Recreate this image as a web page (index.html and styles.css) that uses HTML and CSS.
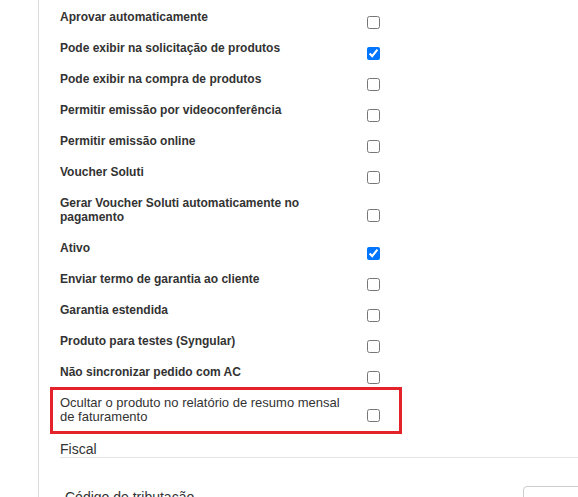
FILE: index.html
```html
<!DOCTYPE html>
<html lang="pt-BR">
<head>
<meta charset="utf-8">
<title>Produto</title>
<link rel="stylesheet" href="styles.css">
</head>
<body>
<div class="panel">
  <div class="row"><label class="lbl">Aprovar automaticamente</label><input class="cb" type="checkbox"></div>
  <div class="row"><label class="lbl">Pode exibir na solicitação de produtos</label><input class="cb" type="checkbox" checked></div>
  <div class="row"><label class="lbl">Pode exibir na compra de produtos</label><input class="cb" type="checkbox"></div>
  <div class="row"><label class="lbl">Permitir emissão por videoconferência</label><input class="cb" type="checkbox"></div>
  <div class="row"><label class="lbl">Permitir emissão online</label><input class="cb" type="checkbox"></div>
  <div class="row"><label class="lbl">Voucher Soluti</label><input class="cb" type="checkbox"></div>
  <div class="row"><label class="lbl">Gerar Voucher Soluti automaticamente no pagamento</label><input class="cb" type="checkbox"></div>
  <div class="row"><label class="lbl">Ativo</label><input class="cb" type="checkbox" checked></div>
  <div class="row"><label class="lbl">Enviar termo de garantia ao cliente</label><input class="cb" type="checkbox"></div>
  <div class="row"><label class="lbl">Garantia estendida</label><input class="cb" type="checkbox"></div>
  <div class="row"><label class="lbl">Produto para testes (Syngular)</label><input class="cb" type="checkbox"></div>
  <div class="row"><label class="lbl">Não sincronizar pedido com AC</label><input class="cb" type="checkbox"></div>
  <div class="row row-marked"><label class="lbl lbl-regular">Ocultar o produto no relatório de resumo mensal de faturamento</label><input class="cb" type="checkbox"></div>
  <h3 class="section">Fiscal</h3>
  <div class="field">
    <label class="field-lbl">Código de tributação</label>
    <div class="select">1706 - Emissão de certificado digital</div>
  </div>
</div>
</body>
</html>
```

FILE: styles.css
```css
html, body {
  margin: 0;
  padding: 0;
  background: #fff;
  overflow: hidden;
  height: 100%;
}

body {
  font-family: "Liberation Sans", Arial, sans-serif;
  color: #333;
}

.panel {
  margin-left: 38px;
  border-left: 1px solid #dcdcdc;
  padding: 10px 0 0 21px;
  min-height: 100%;
  box-sizing: border-box;
}

.row {
  display: flex;
  align-items: center;
  margin-bottom: 17px;
}

.lbl {
  width: 285px;
  font-size: 12px;
  line-height: 14px;
  font-weight: bold;
  color: #333;
}

.lbl-regular {
  font-weight: normal;
  font-size: 13px;
}

.cb {
  margin: 5px 0 -5px 22px;
  width: 13px;
  height: 13px;
}

.row-marked {
  width: 339px;
  margin: -9px 0 7px -10px;
  padding: 6px 0 7px 7px;
  border: 3px solid #e4222a;
}

.section {
  margin: 0;
  font-size: 14px;
  line-height: 16px;
  font-weight: normal;
  color: #333;
  border-bottom: 1px solid #e5e5e5;
  padding-bottom: 0;
}

.field {
  display: flex;
  align-items: flex-start;
  margin-top: 28px;
  padding-left: 5px;
}

.field-lbl {
  flex: none;
  width: 458px;
  padding-top: 3px;
  font-size: 14px;
  line-height: 16px;
  color: #333;
}

.select {
  flex: none;
  width: 220px;
  height: 34px;
  box-sizing: border-box;
  border: 1px solid #ccc;
  border-radius: 4px;
  padding: 5px 10px;
  font-size: 14px;
  line-height: 20px;
  color: #555;
  white-space: nowrap;
}
```
